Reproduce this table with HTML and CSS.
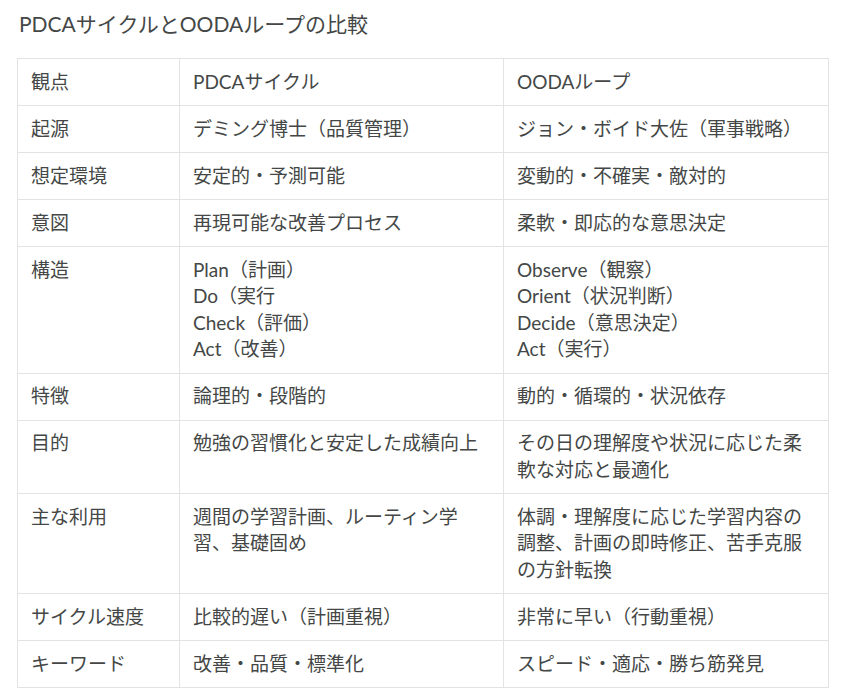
FILE: index.html
```html
<!DOCTYPE html>
<html lang="ja">
<head>
<meta charset="utf-8">
<link rel="stylesheet" href="styles.css">
</head>
<body>
<div class="page">
  <h1 class="title">PDCAサイクルとOODAループの比較</h1>
  <table class="cmp">
    <colgroup><col class="c1"><col class="c2"><col class="c3"></colgroup>
    <tr><td>観点</td><td>PDCAサイクル</td><td>OODAループ</td></tr>
    <tr><td>起源</td><td>デミング博士（品質管理）</td><td>ジョン・ボイド大佐（軍事戦略）</td></tr>
    <tr><td>想定環境</td><td>安定的・予測可能</td><td>変動的・不確実・敵対的</td></tr>
    <tr><td>意図</td><td>再現可能な改善プロセス</td><td>柔軟・即応的な意思決定</td></tr>
    <tr><td>構造</td><td>Plan（計画）<br>Do（実行<br>Check（評価）<br>Act（改善）</td><td>Observe（観察）<br>Orient（状況判断）<br>Decide（意思決定）<br>Act（実行）</td></tr>
    <tr><td>特徴</td><td>論理的・段階的</td><td>動的・循環的・状況依存</td></tr>
    <tr><td>目的</td><td>勉強の習慣化と安定した成績向上</td><td>その日の理解度や状況に応じた柔軟な対応と最適化</td></tr>
    <tr><td>主な利用</td><td>週間の学習計画、ルーティン学習、基礎固め</td><td>体調・理解度に応じた学習内容の調整、計画の即時修正、苦手克服の方針転換</td></tr>
    <tr><td>サイクル速度</td><td>比較的遅い（計画重視）</td><td>非常に早い（行動重視）</td></tr>
    <tr><td>キーワード</td><td>改善・品質・標準化</td><td>スピード・適応・勝ち筋発見</td></tr>
  </table>
</div>
</body>
</html>
```

FILE: styles.css
```css
html, body {
  margin: 0;
  padding: 0;
  background: #ffffff;
}
body {
  font-family: "Lato", "Noto Sans CJK JP", "Noto Sans", sans-serif;
  color: #444746;
}
.page {
  padding: 9px 0 0 17px;
}
.title {
  margin: 0 0 19px 2px;
  font-size: 21px;
  font-weight: 400;
  line-height: 30px;
  color: #444746;
}
.cmp {
  border-collapse: collapse;
  width: 811px;
  table-layout: fixed;
  font-size: 19px;
  line-height: 26.6px;
}
.c1 { width: 162px; }
.c2 { width: 324px; }
.c3 { width: 325px; }
.cmp td {
  border: 1px solid #e3e3e3;
  padding: 9.7px 13px;
  vertical-align: top;
}
```
